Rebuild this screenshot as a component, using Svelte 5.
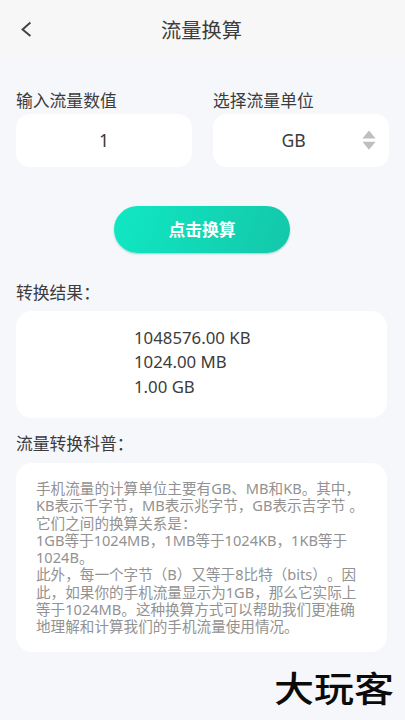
<script lang="ts">
	let amount = $state('1');
	const unit = 'GB';

	const results = ['1048576.00 KB', '1024.00 MB', '1.00 GB'];

	const notes = [
		'手机流量的计算单位主要有GB、MB和KB。其中，',
		'KB表示千字节，MB表示兆字节，GB表示吉字节 。',
		'它们之间的换算关系是：',
		'1GB等于1024MB，1MB等于1024KB，1KB等于',
		'1024B。',
		'此外，每一个字节（B）又等于8比特（bits）。因',
		'此，如果你的手机流量显示为1GB，那么它实际上',
		'等于1024MB。这种换算方式可以帮助我们更准确',
		'地理解和计算我们的手机流量使用情况。'
	].join('\n');
</script>

<div class="page">
	<header class="topbar">
		<button class="back" aria-label="返回">
			<svg width="12" height="18" viewBox="0 0 12 18">
				<path d="M10.4 1.6 2.6 8.4 10.4 15" fill="none" stroke="#444" stroke-width="2" />
			</svg>
		</button>
		<h1>流量换算</h1>
	</header>

	<main>
		<div class="fields">
			<div class="field">
				<label for="amount">输入流量数值</label>
				<input id="amount" class="box" bind:value={amount} />
			</div>
			<div class="field">
				<span class="label">选择流量单位</span>
				<button class="box select">
					<span class="unit">{unit}</span>
					<svg width="14" height="20" viewBox="0 0 14 20">
						<path d="M7 .4 13.6 8.4H.4Z M.4 11.8H13.6L7 19.8Z" fill="#bdbfc2" />
					</svg>
				</button>
			</div>
		</div>

		<button class="convert">点击换算</button>

		<h2>转换结果<span>：</span></h2>
		<div class="card results">
			{#each results as line}
				<p>{line}</p>
			{/each}
		</div>

		<h2 class="notes-title">流量转换科普<span>：</span></h2>
		<div class="card notes">
			<p>{notes}</p>
		</div>
	</main>

	<div class="brand">大玩客</div>
</div>

<style>
	:global(body) {
		margin: 0;
	}

	.page {
		position: relative;
		width: 405px;
		height: 720px;
		overflow: hidden;
		background: #f6f7fa;
		color: #3c3c3c;
		font-family: 'Noto Sans', 'Noto Sans CJK SC', sans-serif;
	}

	button,
	input {
		padding: 0;
		border: none;
		color: inherit;
		font-family: inherit;
	}

	.topbar {
		display: grid;
		grid-template-columns: 50px 1fr 52px;
		align-items: center;
		height: 59px;
		background: #f7f7f7;
	}

	.back {
		display: flex;
		padding-left: 20px;
		background: none;
	}

	h1 {
		margin: 0;
		font-size: 20.2px;
		font-weight: 400;
		line-height: 30px;
		text-align: center;
	}

	main {
		padding: 29px 16px 0;
	}

	.fields {
		display: flex;
		gap: 21px;
	}

	.field {
		display: flex;
		flex-direction: column;
		gap: 1px;
		width: 176px;
	}

	label,
	.label,
	h2 {
		margin: 0;
		font-size: 16.8px;
		font-weight: 400;
		line-height: 25px;
		white-space: nowrap;
	}

	h2 span {
		display: inline-block;
	}

	.box {
		box-sizing: border-box;
		width: 176px;
		height: 53px;
		padding-bottom: 2px;
		border-radius: 14px;
		background: #fff;
		font-size: 17.6px;
		text-align: center;
	}

	.select {
		display: flex;
		align-items: center;
		padding: 0 13px 2px 12px;
	}

	.unit {
		flex: 1;
	}

	.convert {
		display: block;
		width: 176px;
		height: 47px;
		margin: 39px auto 27px 98px;
		padding-bottom: 1px;
		border-radius: 24px;
		background: linear-gradient(110deg, #10e8c3, #13c7a9);
		box-shadow: 0 1px 2px #9bc9d2;
		color: #fff;
		font-size: 16.8px;
		font-weight: 700;
	}

	.card {
		box-sizing: border-box;
		width: 371px;
		border-radius: 16px;
		background: #fff;
	}

	.card p {
		margin: 0;
		white-space: pre;
	}

	.results {
		height: 107px;
		margin-top: 6px;
		padding: 15px 0 0 118px;
		font-size: 16.8px;
		line-height: 24.4px;
	}

	.notes-title {
		margin-top: 13px;
	}

	.notes {
		height: 189px;
		margin-top: 7px;
		padding: 17px 0 0 20px;
		color: #929292;
		font-size: 14.6px;
		line-height: 17.25px;
		text-spacing-trim: space-all;
	}

	.brand {
		position: absolute;
		left: 274px;
		bottom: 11px;
		color: #0b0b0b;
		font-family: 'Noto Sans CJK SC', sans-serif;
		font-size: 40px;
		font-weight: 500;
		line-height: 44px;
		transform: scaleY(0.87);
	}
</style>
